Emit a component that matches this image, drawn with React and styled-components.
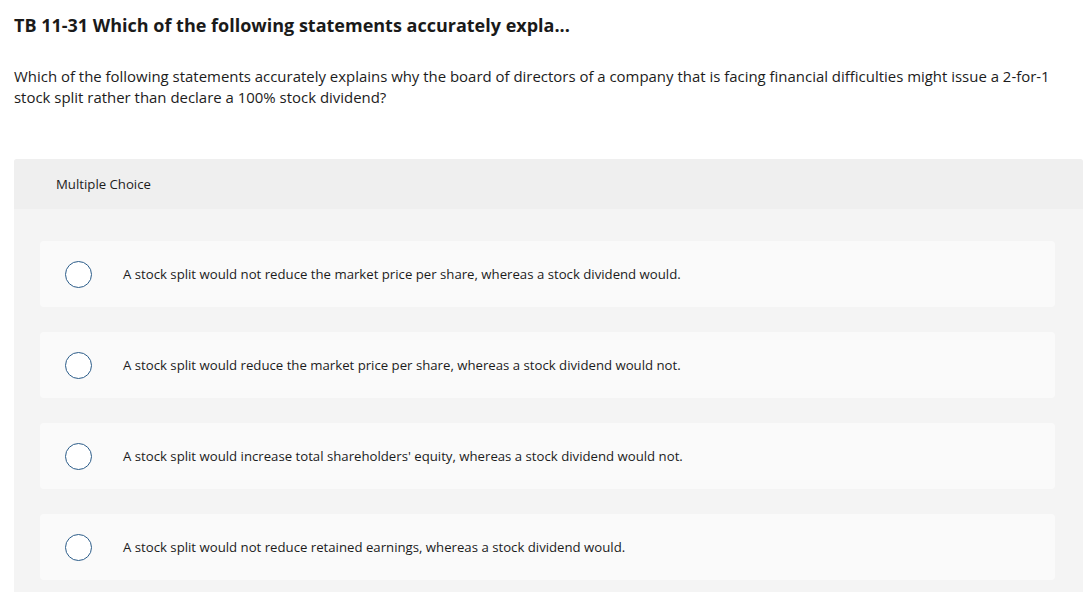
import React from 'react';
import styled, { createGlobalStyle } from 'styled-components';

const GlobalStyle = createGlobalStyle`
  html, body {
    margin: 0;
    padding: 0;
    background: #fff;
    font-family: "Open Sans", "Liberation Sans", sans-serif;
    color: #1c1c1c;
  }
`;

const Page = styled.div`
  padding: 14px 7px 0 14px;
  width: 1090px;
  height: 592px;
  box-sizing: border-box;
  overflow: hidden;
`;

const Title = styled.h1`
  margin: 0;
  font-size: 18px;
  font-weight: 700;
  line-height: 22px;
  color: #1a1a1a;
`;

const Prompt = styled.p`
  margin: 30px 0 0;
  max-width: 1060px;
  font-size: 14.95px;
  line-height: 21px;
  color: #1c1c1c;
`;

const Panel = styled.section`
  margin-top: 51px;
  border-radius: 3px 3px 0 0;
  background: #f4f4f4;
  overflow: hidden;
`;

const PanelHeader = styled.div`
  height: 50px;
  display: flex;
  align-items: center;
  padding-left: 42px;
  background: #efefef;
  font-size: 13.2px;
  color: #1c1c1c;
`;

const Options = styled.div`
  display: flex;
  flex-direction: column;
  gap: 25px;
  padding: 32px 28px 40px 26px;
`;

const Option = styled.label`
  display: flex;
  align-items: center;
  height: 66px;
  padding-left: 25px;
  background: #fafafa;
  border-radius: 4px;
  cursor: pointer;
`;

const Radio = styled.span`
  flex: none;
  width: 25px;
  height: 25px;
  border: 1.5px solid #2b5c89;
  border-radius: 50%;
  background: #fff;
`;

const OptionText = styled.span`
  margin-left: 31px;
  font-size: 13.2px;
  color: #1c1c1c;
`;

const choices = [
  'A stock split would not reduce the market price per share, whereas a stock dividend would.',
  'A stock split would reduce the market price per share, whereas a stock dividend would not.',
  "A stock split would increase total shareholders' equity, whereas a stock dividend would not.",
  'A stock split would not reduce retained earnings, whereas a stock dividend would.',
];

const App = () => (
  <Page>
    <GlobalStyle />
    <Title>TB 11-31 Which of the following statements accurately expla...</Title>
    <Prompt>
      Which of the following statements accurately explains why the board of directors of a company that is facing
      financial difficulties might issue a 2-for-1 stock split rather than declare a 100% stock dividend?
    </Prompt>
    <Panel>
      <PanelHeader>Multiple Choice</PanelHeader>
      <Options>
        {choices.map(text => (
          <Option key={text}>
            <Radio />
            <OptionText>{text}</OptionText>
          </Option>
        ))}
      </Options>
    </Panel>
  </Page>
);

export default App;
